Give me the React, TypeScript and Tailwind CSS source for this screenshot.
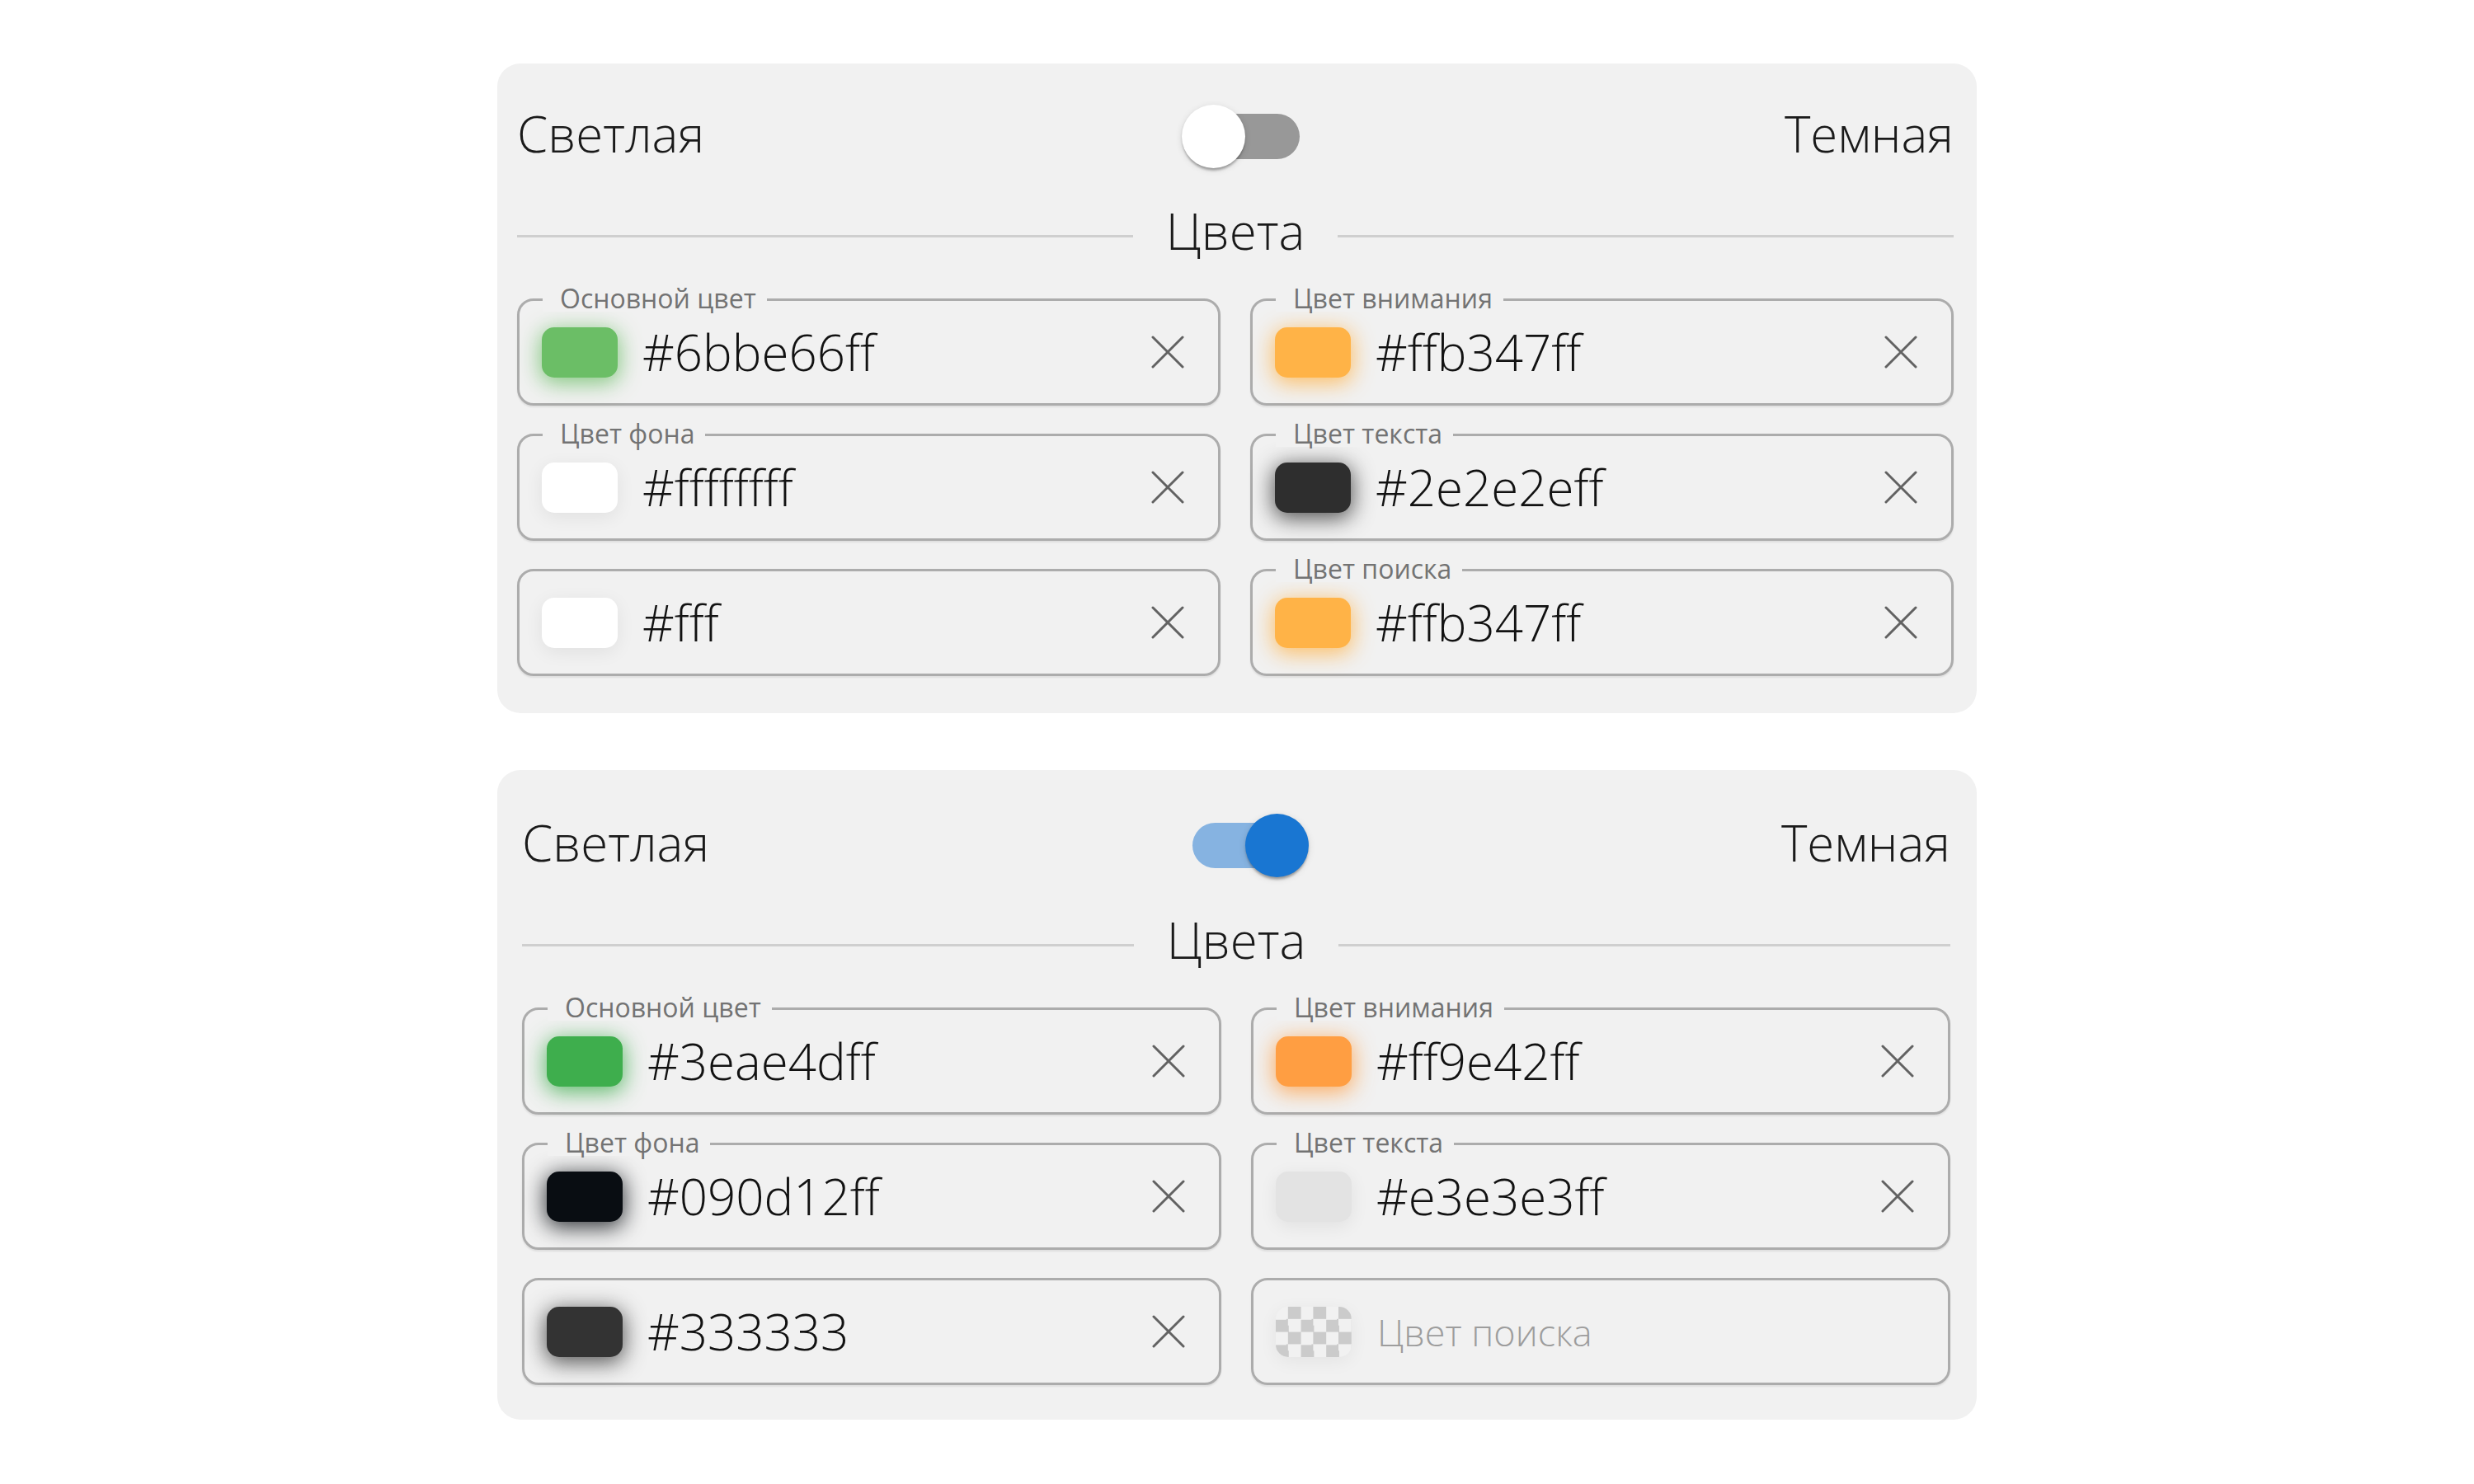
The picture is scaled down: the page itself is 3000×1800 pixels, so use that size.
import React from 'react';

type Field = {
    label?: string;
    value?: string;
    placeholder?: string;
    swatch: string;
};

const lightFields: Field[] = [
    { label: 'Основной цвет', value: '#6bbe66ff', swatch: 'bg-[#6bbe66] shadow-[0_5px_26px_2px_rgba(107,190,102,0.8)]' },
    { label: 'Цвет внимания', value: '#ffb347ff', swatch: 'bg-[#ffb347] shadow-[0_5px_26px_2px_rgba(255,179,71,0.8)]' },
    { label: 'Цвет фона', value: '#ffffffff', swatch: 'bg-white shadow-[0_5px_22px_rgba(0,0,0,0.07)]' },
    { label: 'Цвет текста', value: '#2e2e2eff', swatch: 'bg-[#2e2e2e] shadow-[0_5px_26px_2px_rgba(46,46,46,0.8)]' },
    { value: '#fff', swatch: 'bg-white shadow-[0_5px_22px_rgba(0,0,0,0.07)]' },
    { label: 'Цвет поиска', value: '#ffb347ff', swatch: 'bg-[#ffb347] shadow-[0_5px_26px_2px_rgba(255,179,71,0.8)]' },
];

const darkFields: Field[] = [
    { label: 'Основной цвет', value: '#3eae4dff', swatch: 'bg-[#3eae4d] shadow-[0_5px_26px_2px_rgba(62,174,77,0.8)]' },
    { label: 'Цвет внимания', value: '#ff9e42ff', swatch: 'bg-[#ff9e42] shadow-[0_5px_26px_2px_rgba(255,158,66,0.8)]' },
    { label: 'Цвет фона', value: '#090d12ff', swatch: 'bg-[#090d12] shadow-[0_5px_26px_2px_rgba(9,13,18,0.8)]' },
    { label: 'Цвет текста', value: '#e3e3e3ff', swatch: 'bg-[#e3e3e3] shadow-[0_5px_22px_rgba(0,0,0,0.07)]' },
    { value: '#333333', swatch: 'bg-[#333333] shadow-[0_5px_26px_2px_rgba(51,51,51,0.8)]' },
    {
        placeholder: 'Цвет поиска',
        swatch:
            'bg-[conic-gradient(#cbcbcb_25%,transparent_0_50%,#cbcbcb_0_75%,transparent_0)] bg-[length:30.6px_30.6px] shadow-[0_5px_22px_rgba(0,0,0,0.06)]',
    },
];

function CloseIcon() {
    return (
        <svg viewBox="0 0 40 40" className="ml-auto h-[40px] w-[40px] shrink-0">
            <path d="M2 2 L38 38 M38 2 L2 38" stroke="#626262" strokeWidth="3" strokeLinecap="round" />
        </svg>
    );
}

function ColorField({ field }: { field: Field }) {
    return (
        <div className="relative h-[130px] rounded-[20px] border-[3px] border-[#acacac] shadow-[0_2px_2px_rgba(0,0,0,0.08)]">
            {field.label && (
                <span className="absolute -top-[3px] left-[28px] -translate-y-1/2 bg-[#f1f1f1] pl-[21px] pr-[13px] text-[32px] font-normal leading-none text-[#737373]">
                    {field.label}
                </span>
            )}
            <div className="flex h-full items-center pl-[27px] pr-[41px]">
                <div className={`h-[61px] w-[92px] shrink-0 rounded-[15px] ${field.swatch}`} />
                {field.value ? (
                    <>
                        <span className="ml-[30px] text-[60px] leading-none text-[#121212]">{field.value}</span>
                        <CloseIcon />
                    </>
                ) : (
                    <span className="ml-[31px] text-[45px] leading-none text-[#9d9d9d]">{field.placeholder}</span>
                )}
            </div>
        </div>
    );
}

function Toggle({ on }: { on: boolean }) {
    return (
        <div className="relative h-[77px] w-[153px]">
            <div
                className={`absolute left-[12px] top-[11px] h-[55px] w-[131px] rounded-full ${
                    on ? 'bg-[#86b3e1]' : 'bg-[#989898]'
                }`}
            />
            <div
                className={`absolute top-0 h-[77px] w-[77px] rounded-full shadow-[0_5px_3px_-2px_rgba(0,0,0,0.2),0_2px_3px_rgba(0,0,0,0.14),0_2px_8px_rgba(0,0,0,0.12)] ${
                    on ? 'left-[76px] bg-[#1976d2]' : 'left-0 bg-white'
                }`}
            />
        </div>
    );
}

function ThemeCard({ on, fields, pad }: { on: boolean; fields: Field[]; pad: string }) {
    return (
        <div className={`h-[788px] w-[1794px] rounded-[28px] bg-[#f1f1f1] ${pad}`}>
            <div className="flex h-[77px] items-center justify-between text-[60px] leading-none text-[#1a1a1a]">
                <span className="mb-[8px]">Светлая</span>
                <Toggle on={on} />
                <span className="mb-[8px]">Темная</span>
            </div>
            <div className="mt-[45px] flex h-[74px] items-center gap-[40px]">
                <div className="h-[3px] flex-1 bg-[#cfcfcf]" />
                <span className="mb-[12px] text-[60px] leading-none text-[#1a1a1a]">Цвета</span>
                <div className="h-[3px] flex-1 bg-[#cfcfcf]" />
            </div>
            <div className="mt-[39px] grid grid-cols-2 gap-x-[36px] gap-y-[34px]">
                {fields.map((f, i) => (
                    <ColorField key={i} field={f} />
                ))}
            </div>
        </div>
    );
}

export default function App() {
    return (
        <div className="flex min-h-[1800px] w-full flex-col items-center gap-[69px] bg-white pt-[77px] font-['Open_Sans',sans-serif] font-light">
            <ThemeCard on={false} fields={lightFields} pad="pl-[24px] pr-[28px] pt-[50px]" />
            <ThemeCard on={true} fields={darkFields} pad="pl-[30px] pr-[32px] pt-[53px]" />
        </div>
    );
}
